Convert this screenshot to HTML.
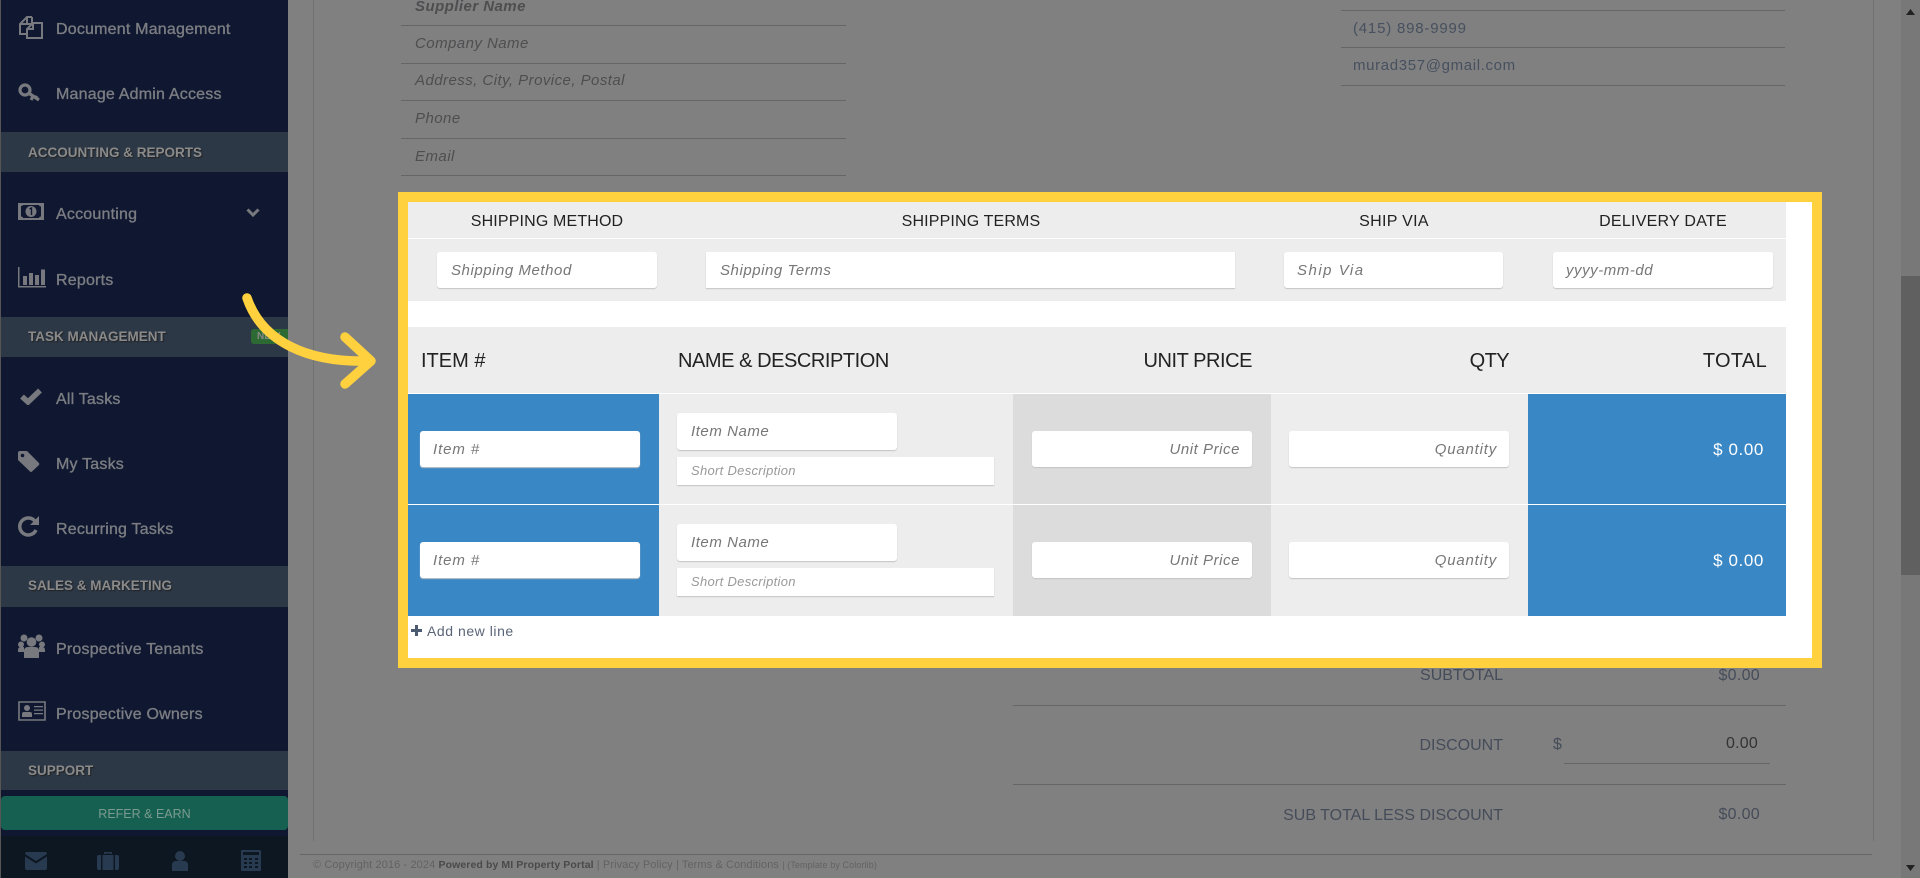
<!DOCTYPE html>
<html><head><meta charset="utf-8"><style>
html,body{margin:0;padding:0;width:1920px;height:878px;overflow:hidden;background:#808080;font-family:"Liberation Sans",sans-serif}
.a{position:absolute}
.t{position:absolute;white-space:nowrap;line-height:20px}
.n{position:absolute;left:56px;white-space:nowrap;line-height:20px;font-size:16px;letter-spacing:.2px;color:#7b7d82;-webkit-text-stroke:.35px #7b7d82}
.s{position:absolute;left:1px;width:287px;height:40px;background:#2c3846}
.s span{position:absolute;left:27px;top:10px;line-height:20px;font-size:13.5px;font-weight:bold;color:#8a8a8a;text-shadow:1px 1px 1px #222;white-space:nowrap}
.i{position:absolute;fill:#77797e}
.in{position:absolute;background:#fff;border-radius:3px;box-shadow:0 1px 1px #c4c4c4;height:36px}
.ph{position:absolute;top:9px;line-height:20px;font-size:15px;letter-spacing:.55px;font-style:italic;color:#777;white-space:nowrap}
.h{position:absolute;font-size:16px;letter-spacing:.15px;color:#222;line-height:20px;top:212px;white-space:nowrap;text-align:center;transform:translateX(-50%)}
.ih{position:absolute;font-size:20px;letter-spacing:-.45px;color:#222;line-height:24px;top:349px;white-space:nowrap}
.l{position:absolute;height:1px;background:#666}
.sup{position:absolute;left:415px;font-style:italic;font-size:15px;letter-spacing:.45px;color:#4e4e50;line-height:20px;white-space:nowrap}
.tot{position:absolute;font-size:16px;color:#454c59;line-height:20px;white-space:nowrap}
</style></head><body>

<!-- main -->
<div class="a" style="left:313px;top:0;width:1px;height:841px;background:#727272"></div>
<div class="a" style="left:1873px;top:0;width:1px;height:841px;background:#727272"></div>
<div class="a" style="left:300px;top:854px;width:1572px;height:1px;background:#666"></div>
<div class="t" style="left:313px;top:855px;font-size:11px;letter-spacing:.1px;color:#626262">© Copyright 2016 - 2024 <b style="color:#4a4a4a;font-size:10.5px">Powered by MI Property Portal</b> | Privacy Policy | Terms &amp; Conditions <span style="font-size:9px">| (Template by Colorlib)</span></div>

<div class="sup" style="top:-3px;font-weight:bold">Supplier Name</div>
<div class="l" style="left:401px;top:25px;width:445px"></div>
<div class="sup" style="top:34px">Company Name</div>
<div class="l" style="left:401px;top:63px;width:445px"></div>
<div class="sup" style="top:71px">Address, City, Provice, Postal</div>
<div class="l" style="left:401px;top:100px;width:445px"></div>
<div class="sup" style="top:109px">Phone</div>
<div class="l" style="left:401px;top:138px;width:445px"></div>
<div class="sup" style="top:147px">Email</div>
<div class="l" style="left:401px;top:175px;width:445px"></div>

<div class="l" style="left:1341px;top:10px;width:444px"></div>
<div class="t" style="left:1353px;top:19px;font-size:15px;letter-spacing:.8px;color:#47505f">(415) 898-9999</div>
<div class="l" style="left:1341px;top:47px;width:444px"></div>
<div class="t" style="left:1353px;top:56px;font-size:15px;letter-spacing:.65px;color:#47505f">murad357@gmail.com</div>
<div class="l" style="left:1341px;top:85px;width:444px"></div>

<!-- totals -->
<div class="tot" style="right:417px;top:666px">SUBTOTAL</div>
<div class="tot" style="right:160px;top:666px;letter-spacing:.3px">$0.00</div>
<div class="l" style="left:1013px;top:705px;width:773px"></div>
<div class="tot" style="right:417px;top:736px">DISCOUNT</div>
<div class="tot" style="left:1553px;top:735px">$</div>
<div class="tot" style="right:162px;top:734px;color:#333;letter-spacing:.2px">0.00</div>
<div class="l" style="left:1564px;top:763px;width:206px"></div>
<div class="l" style="left:1013px;top:784px;width:773px"></div>
<div class="tot" style="right:417px;top:806px">SUB TOTAL LESS DISCOUNT</div>
<div class="tot" style="right:160px;top:805px;letter-spacing:.3px">$0.00</div>

<!-- scrollbar -->
<div class="a" style="left:1901px;top:0;width:19px;height:878px;background:#787878"></div>
<div class="a" style="left:1901px;top:276px;width:19px;height:299px;background:#606060"></div>
<svg class="a" style="left:1901px;top:0" width="19" height="878"><path d="M5 15L9.5 9L14 15Z" fill="#222"/><path d="M5 865L9.5 871L14 865Z" fill="#222"/></svg>

<!-- sidebar -->
<div class="a" style="left:0;top:0;width:288px;height:878px;background:#0f1830"></div>
<div class="a" style="left:0;top:0;width:1px;height:878px;background:#555"></div>
<div class="a" style="left:1px;top:836px;width:287px;height:42px;background:#0d1722"></div>

<div class="n" style="top:20px">Document Management</div>
<div class="n" style="top:85px">Manage Admin Access</div>
<div class="s" style="top:132px"><span style="top:11px">ACCOUNTING &amp; REPORTS</span></div>
<div class="n" style="top:205px">Accounting</div>
<div class="n" style="top:271px">Reports</div>
<div class="s" style="top:317px"><span>TASK MANAGEMENT</span></div>
<div class="a" style="left:251px;top:329px;width:37px;height:15px;background:#2d6a33;border-radius:3px 0 0 3px;font:bold 10px/15px 'Liberation Sans',sans-serif;color:#888;text-indent:6px;overflow:hidden">NEW</div>
<div class="n" style="top:390px">All Tasks</div>
<div class="n" style="top:455px">My Tasks</div>
<div class="n" style="top:520px">Recurring Tasks</div>
<div class="s" style="top:566px;height:41px"><span>SALES &amp; MARKETING</span></div>
<div class="n" style="top:640px">Prospective Tenants</div>
<div class="n" style="top:705px">Prospective Owners</div>
<div class="s" style="top:751px;height:39px"><span>SUPPORT</span></div>
<div class="a" style="left:1px;top:796px;width:287px;height:34px;background:#156050;border-radius:4px;text-align:center;font-size:12.5px;line-height:36px;color:#7c9a90">REFER &amp; EARN</div>

<!-- sidebar icons -->
<svg class="a" style="left:18px;top:16px" width="26" height="24" fill="none" stroke="#77797e" stroke-width="2"><path d="M14 1H9L2 8V18H8M14 1V8H8M9 2V8H2"/><path d="M15 7H24V22H9V13L15 7ZM15 8V13H9"/></svg>
<svg class="a" style="left:18px;top:83px" width="24" height="20" fill="none" stroke="#77797e" stroke-width="3.2"><circle cx="7" cy="7" r="5"/><path d="M10.5 10L21 17M15 13.5L13 17M19 13L17 16"/></svg>
<svg class="a" style="left:18px;top:203px" width="27" height="18"><path class="i" fill="#77797e" d="M0 0H26V17H0Z"/><path fill="#0f1830" d="M3 3C4 3 5 2.500 5 2H21C21 3 22 3.500 23 3.500V13.500C22 13.500 21 14 21 15H5C5 14 4 13.500 3 13.500Z"/><circle cx="13" cy="8.500" r="5.500" fill="#77797e"/><path d="M11.500 6L13.500 5V12" stroke="#0f1830" stroke-width="1.400" fill="none"/></svg>
<svg class="a" style="left:18px;top:267px" width="29" height="21" fill="#77797e"><path d="M0 0H1.500V19H28V20.500H0Z"/><path d="M5 9H9V18H5ZM11 6H15V18H11ZM17 8H21V18H17ZM23 2.500H27V18H23Z"/></svg>
<svg class="a" style="left:20px;top:388px" width="22" height="17" fill="none" stroke="#77797e" stroke-width="5.500"><path d="M2 8.500L8 14L20 2.500"/></svg>
<svg class="a" style="left:18px;top:451px" width="22" height="21" fill="#77797e"><path d="M0 2Q0 0 2 0H9L21 12Q21.500 13 21 14L14 20.500Q13 21.500 12 20.500L0 9Z"/><circle cx="4.500" cy="4.500" r="1.800" fill="#0f1830"/></svg>
<svg class="a" style="left:18px;top:516px" width="22" height="21" fill="none" stroke="#77797e" stroke-width="3.500"><path d="M17.500 6A8.500 8.500 0 1 0 18 14"/><path d="M21 0V9H12Z" fill="#77797e" stroke="none"/></svg>
<svg class="a" style="left:18px;top:634px" width="27" height="24" fill="#77797e"><circle cx="6" cy="4" r="3.500"/><circle cx="21" cy="4" r="3.500"/><circle cx="13.500" cy="8" r="4.800"/><circle cx="3" cy="10.500" r="3"/><circle cx="24" cy="10.500" r="3"/><path d="M6 24V17Q6 13 10 13H17Q21 13 21 17V24Z"/><path d="M0 16Q0 13 3 13H6V18H0ZM21 13H24Q27 13 27 16V18H21Z"/></svg>
<svg class="a" style="left:18px;top:701px" width="29" height="21" fill="#77797e"><path d="M1 1H27V19H1Z" fill="none" stroke="#77797e" stroke-width="1.600"/><circle cx="9" cy="7" r="3"/><path d="M4 16V13Q4 11 6 11H12Q14 11 14 13V16Z"/><path d="M16 5H25V6.300H16ZM16 8.500H25V9.800H16ZM16 12H25V13.300H16Z"/></svg>
<svg class="a" style="left:246px;top:208px" width="14" height="10" fill="none" stroke="#77797e" stroke-width="3"><path d="M1.500 1.500L7 7L12.500 1.500"/></svg>

<!-- footer icons -->
<svg class="a" style="left:25px;top:852px" width="22" height="18" fill="#283a50"><path d="M0 2Q0 0 2 0H20Q22 0 22 2L11 9Z"/><path d="M0 4.500L11 11.500L22 4.500V16Q22 18 20 18H2Q0 18 0 16Z"/></svg>
<svg class="a" style="left:97px;top:851px" width="22" height="19" fill="#283a50"><path d="M7 3V1H15V3H13.500V2.500H8.500V3ZM2 4H4V19H2Q0 19 0 17V6Q0 4 2 4ZM5.500 4H16.500V19H5.500ZM18 4H20Q22 4 22 6V17Q22 19 20 19H18Z"/></svg>
<svg class="a" style="left:172px;top:851px" width="16" height="20" fill="#283a50"><circle cx="8" cy="5" r="5"/><path d="M0 20V14Q0 10 4 10H12Q16 10 16 14V20Z"/></svg>
<svg class="a" style="left:241px;top:850px" width="20" height="21" fill="#283a50"><path d="M1 0H19Q20 0 20 1V20Q20 21 19 21H1Q0 21 0 20V1Q0 0 1 0ZM2 2V5H18V2ZM3 8V10H6V8ZM8 8V10H11V8ZM14 8V10H17V8ZM3 12V14H6V12ZM8 12V14H11V12ZM14 12V14H17V12ZM3 16V18H6V16ZM8 16V18H11V16ZM14 16V18H17V16Z" fill-rule="evenodd"/></svg>

<!-- highlight -->
<div class="a" style="left:398px;top:192px;width:1424px;height:476px;background:#ffd13e"></div>
<div class="a" style="left:408px;top:202px;width:1404px;height:456px;background:#fff"></div>
<div class="a" style="left:408px;top:202px;width:1378px;height:99px;background:#ededed"></div>
<div class="a" style="left:408px;top:238px;width:1378px;height:1px;background:#fff"></div>
<div class="h" style="left:547px">SHIPPING METHOD</div>
<div class="h" style="left:971px">SHIPPING TERMS</div>
<div class="h" style="left:1394px;letter-spacing:.3px">SHIP VIA</div>
<div class="h" style="left:1663px;letter-spacing:.25px">DELIVERY DATE</div>
<div class="in" style="left:437px;top:252px;width:220px"><span class="ph" style="left:14px">Shipping Method</span></div>
<div class="in" style="left:706px;top:252px;width:529px;border-radius:0"><span class="ph" style="left:14px">Shipping Terms</span></div>
<div class="in" style="left:1284px;top:252px;width:219px"><span class="ph" style="left:13px;letter-spacing:1.5px">Ship Via</span></div>
<div class="in" style="left:1553px;top:252px;width:220px"><span class="ph" style="left:13px">yyyy-mm-dd</span></div>

<div class="a" style="left:408px;top:327px;width:1378px;height:66px;background:#ededed"></div>
<div class="ih" style="left:421px;letter-spacing:0">ITEM #</div>
<div class="ih" style="left:678px">NAME &amp; DESCRIPTION</div>
<div class="ih" style="right:668px">UNIT PRICE</div>
<div class="ih" style="right:411px;letter-spacing:-.6px">QTY</div>
<div class="ih" style="right:153px;letter-spacing:.3px">TOTAL</div>

<!-- rows -->
<div class="a" style="left:408px;top:394px;width:251px;height:222px;background:#3a87c5"></div>
<div class="a" style="left:659px;top:394px;width:354px;height:222px;background:#ededed"></div>
<div class="a" style="left:1013px;top:394px;width:258px;height:222px;background:#dcdcdc"></div>
<div class="a" style="left:1271px;top:394px;width:257px;height:222px;background:#ededed"></div>
<div class="a" style="left:1528px;top:394px;width:258px;height:222px;background:#3a87c5"></div>
<div class="a" style="left:408px;top:504px;width:1378px;height:1px;background:#fff"></div>

<div class="in" style="left:420px;top:431px;width:220px"><span class="ph" style="left:13px;letter-spacing:.9px">Item #</span></div>
<div class="in" style="left:677px;top:413px;width:220px;height:37px"><span class="ph" style="left:14px">Item Name</span></div>
<div class="in" style="left:677px;top:457px;width:317px;height:28px;border-radius:0"><span class="ph" style="left:14px;top:4px;font-size:13px;letter-spacing:.3px;color:#999">Short Description</span></div>
<div class="in" style="left:1032px;top:431px;width:220px"><span class="ph" style="right:12px">Unit Price</span></div>
<div class="in" style="left:1289px;top:431px;width:220px"><span class="ph" style="right:12px;letter-spacing:.8px">Quantity</span></div>
<div class="t" style="right:156px;top:440px;font-size:17px;letter-spacing:.6px;color:#fff">$ 0.00</div>

<div class="in" style="left:420px;top:542px;width:220px"><span class="ph" style="left:13px;letter-spacing:.9px">Item #</span></div>
<div class="in" style="left:677px;top:524px;width:220px;height:37px"><span class="ph" style="left:14px">Item Name</span></div>
<div class="in" style="left:677px;top:568px;width:317px;height:28px;border-radius:0"><span class="ph" style="left:14px;top:4px;font-size:13px;letter-spacing:.3px;color:#999">Short Description</span></div>
<div class="in" style="left:1032px;top:542px;width:220px"><span class="ph" style="right:12px">Unit Price</span></div>
<div class="in" style="left:1289px;top:542px;width:220px"><span class="ph" style="right:12px;letter-spacing:.8px">Quantity</span></div>
<div class="t" style="right:156px;top:551px;font-size:17px;letter-spacing:.6px;color:#fff">$ 0.00</div>

<svg class="a" style="left:410px;top:624px" width="13" height="13" fill="#4b5a70"><path d="M5 1H8V5H12V8H8V12H5V8H1V5H5Z"/></svg>
<div class="t" style="left:427px;top:621px;font-size:14px;letter-spacing:.55px;color:#5a6578">Add new line</div>

<!-- arrow -->
<svg class="a" style="left:240px;top:290px" width="140" height="100" fill="none" stroke="#ffd13e" stroke-linecap="round" stroke-linejoin="round"><path d="M7 8C22 52 68 73 130 71" stroke-width="9.500"/><path d="M105 47L131 71L105 94" stroke-width="9.500"/></svg>
</body></html>
